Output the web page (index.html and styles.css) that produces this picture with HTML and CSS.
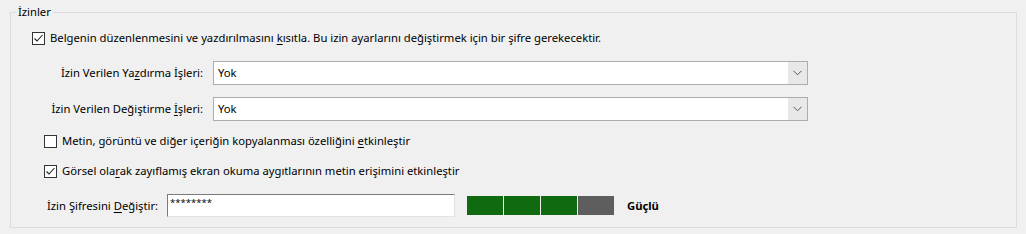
FILE: index.html
```html
<!DOCTYPE html>
<html lang="tr">
<head>
    <meta charset="UTF-8">
    <title>İzinler</title>
    <link rel="stylesheet" href="styles.css">
</head>
<body>
    <!-- Grup: İzinler -->
    <fieldset class="perms">
        <legend>İzinler</legend>

        <div class="check-row main">
            <span class="box checked">
                <svg width="11" height="11" viewBox="0 0 11 11"><polyline points="1.5,5.5 4,8 9.5,2" fill="none" stroke="#222" stroke-width="1.1"/></svg>
            </span>
            <span>Belgenin düzenlenmesini ve yazdırılmasını <u>k</u>ısıtla. Bu izin ayarlarını değiştirmek için bir şifre gerekecektir.</span>
        </div>

        <div class="field-row first">
            <label class="field-label">İzin Verilen Ya<u>z</u>dırma İşleri:</label>
            <div class="select">
                <span class="select-value">Yok</span>
                <span class="select-arrow">
                    <svg width="9" height="6" viewBox="0 0 9 6"><polyline points="0.5,0.8 4.5,4.8 8.5,0.8" fill="none" stroke="#555" stroke-width="1"/></svg>
                </span>
            </div>
        </div>

        <div class="field-row">
            <label class="field-label">İzin Verilen Değiştirme <u>İ</u>şleri:</label>
            <div class="select">
                <span class="select-value">Yok</span>
                <span class="select-arrow">
                    <svg width="9" height="6" viewBox="0 0 9 6"><polyline points="0.5,0.8 4.5,4.8 8.5,0.8" fill="none" stroke="#555" stroke-width="1"/></svg>
                </span>
            </div>
        </div>

        <div class="check-row sub copy">
            <span class="box"></span>
            <span>Metin, görüntü ve diğer içeriğin kopyalanması özelliğini <u>e</u>tkinleştir</span>
        </div>

        <div class="check-row sub access">
            <span class="box checked">
                <svg width="11" height="11" viewBox="0 0 11 11"><polyline points="1.5,5.5 4,8 9.5,2" fill="none" stroke="#222" stroke-width="1.1"/></svg>
            </span>
            <span>Görsel ola<u>r</u>ak zayıflamış ekran okuma aygıtlarının metin erişimini etkinleştir</span>
        </div>

        <div class="pw-row">
            <label class="pw-label">İzin Şifresini <u>D</u>eğiştir:</label>
            <div class="pw-input">********</div>
            <div class="strength">
                <span class="seg on"></span>
                <span class="seg on"></span>
                <span class="seg on"></span>
                <span class="seg"></span>
            </div>
            <span class="strength-text">Güçlü</span>
        </div>
    </fieldset>
</body>
</html>
```

FILE: styles.css
```css
/* Temel */
* {
    box-sizing: border-box;
}

body {
    margin: 0;
    padding-top: 4px;
    background-color: #f0f0f0;
    font-family: "Noto Sans", "Open Sans", sans-serif;
    font-size: 11.25px;
    line-height: 16px;
    color: #000;
}

u {
    text-decoration-thickness: 1px;
    text-underline-offset: 2px;
}

/* Grup kutusu */
.perms {
    margin: 0 9px 0 10px;
    padding: 0 0 10px 0;
    border: 1px solid #dcdcdc;
    min-width: 0;
}

.perms legend {
    margin-left: 5px;
    padding: 0 2px;
    line-height: 16px;
}

/* Onay kutuları */
.check-row {
    display: flex;
    align-items: center;
    gap: 5px;
    height: 16px;
}

.check-row.main {
    margin-top: 10px;
    padding-left: 21px;
}

.check-row.sub {
    padding-left: 33px;
}

.check-row.copy {
    margin-top: 12px;
}

.check-row.access {
    margin-top: 14px;
}

.box {
    width: 13px;
    height: 13px;
    border: 1px solid #333;
    background-color: #fff;
    display: flex;
    align-items: center;
    justify-content: center;
    flex-shrink: 0;
}

.box svg {
    display: block;
}

/* Açılır listeler */
.field-row {
    display: flex;
    align-items: center;
    margin-top: 12px;
}

.field-row.first {
    margin-top: 15px;
}

.field-label {
    width: 202px;
    text-align: right;
    padding-right: 10px;
}

.select {
    display: flex;
    width: 595px;
    height: 24px;
    border: 1px solid #adadad;
    background-color: #fff;
}

.select-value {
    flex: 1;
    padding-left: 4px;
    line-height: 22px;
}

.select-arrow {
    width: 19px;
    background-color: #e8e8e8;
    display: flex;
    align-items: center;
    justify-content: center;
}

/* Şifre satırı */
.pw-row {
    display: flex;
    align-items: center;
    margin-top: 15px;
    padding-left: 36px;
    height: 23px;
}

.pw-label {
    width: 120px;
}

.pw-input {
    width: 288px;
    height: 23px;
    border: 1px solid;
    border-color: #7a7a7a #e3e3e3 #e3e3e3 #7a7a7a;
    background-color: #fff;
    padding-left: 2px;
    line-height: 16px;
    font-size: 9.5px;
}

.strength {
    display: flex;
    gap: 1px;
    margin-left: 12px;
    height: 19px;
}

.seg {
    width: 36px;
    background-color: #5e5e5e;
}

.seg.on {
    background-color: #0f6a10;
}

.strength-text {
    margin-left: 13px;
    font-weight: bold;
}
```
